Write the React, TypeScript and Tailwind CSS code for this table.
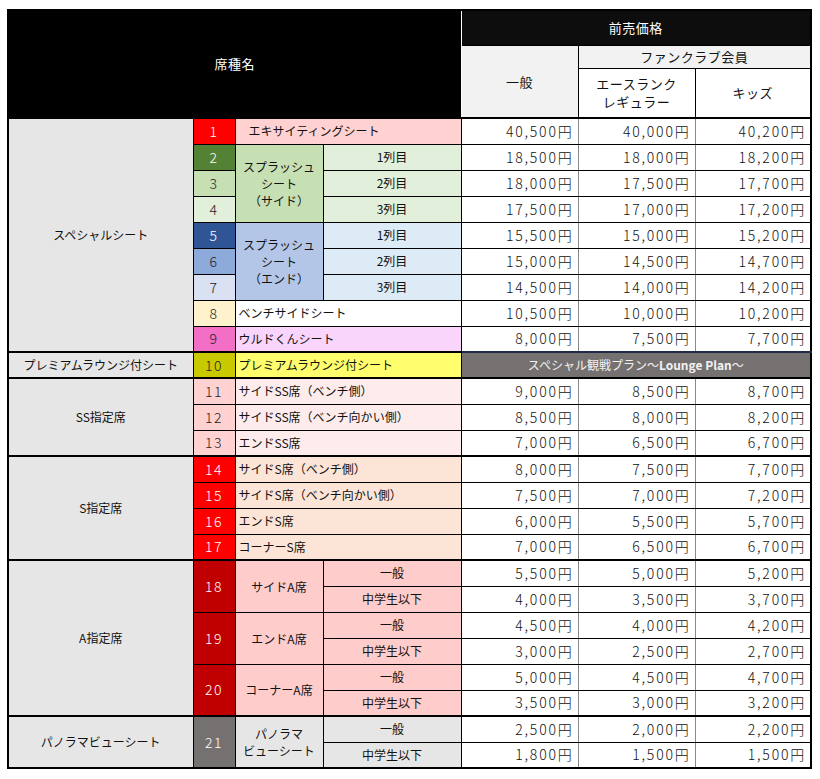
import React from 'react';

const JP = "font-['Noto_Sans_CJK_JP',sans-serif]";
const NUM = "font-['Noto_Sans_CJK_JP',sans-serif]";

type Cell = { top?: boolean };

function Num({ n, bg, light, top, span }: { n: number; bg: string; light?: boolean; top?: boolean; span?: number }) {
  return (
    <td
      rowSpan={span}
      className={`border border-black text-center text-[14px] font-light tracking-[1.5px] ${JP} ${light ? 'text-white' : 'text-[#222]'} ${top ? 'border-t-2' : ''} ${bg}`}
    >
      {n}
    </td>
  );
}

function Prices({ values, top }: { values: string[] } & Cell) {
  return (
    <>
      {values.map((v, i) => (
        <td
          key={i}
          className={`border border-black ${i > 0 ? 'border-l-[#8a8a8a]' : ''} ${i < 2 ? 'border-r-[#8a8a8a]' : ''} bg-white pr-[4px] text-right text-[14px] font-light tracking-[1.8px] text-[#111] ${NUM} ${top ? 'border-t-2' : ''}`}
        >
          {v}
        </td>
      ))}
    </>
  );
}

function Name({ text, bg, top, indent }: { text: string; bg: string; indent?: boolean } & Cell) {
  return (
    <td
      colSpan={2}
      className={`border border-black ${indent ? 'pl-[13px]' : 'pl-[3px]'} text-left text-[12px] whitespace-nowrap ${bg} ${top ? 'border-t-2' : ''}`}
    >
      {text}
    </td>
  );
}

function Sub({ text, bg, top }: { text: string; bg: string } & Cell) {
  return (
    <td className={`border border-black text-center text-[12px] ${bg} ${top ? 'border-t-2' : ''}`}>{text}</td>
  );
}

function Group({ text, span, top }: { text: string; span: number } & Cell) {
  return (
    <td
      rowSpan={span}
      className={`border border-black bg-[#e6e6e6] text-center text-[12px] whitespace-nowrap ${top ? 'border-t-2' : ''}`}
    >
      {text}
    </td>
  );
}

function Merged({ lines, bg, span, top }: { lines: string[]; bg: string; span: number } & Cell) {
  return (
    <td
      rowSpan={span}
      className={`border border-black text-center text-[12px] leading-[17px] ${bg} ${top ? 'border-t-2' : ''}`}
    >
      {lines.map((l, i) => (
        <div key={i}>{l}</div>
      ))}
    </td>
  );
}

export default function App() {
  const row = 'h-[26px]';

  return (
    <div className={`min-h-screen bg-white pl-[7px] pt-[9px] ${JP} text-[#111]`}>
      <table className="table-fixed border-collapse border-2 border-black w-[803px]">
        <colgroup>
          <col className="w-[185px]" />
          <col className="w-[42px]" />
          <col className="w-[88px]" />
          <col className="w-[138px]" />
          <col className="w-[117px]" />
          <col className="w-[117px]" />
          <col className="w-[116px]" />
        </colgroup>
        <thead>
          <tr className="h-[35px]">
            <th
              colSpan={4}
              rowSpan={3}
              className="border border-black border-r-white bg-black text-[13px] font-normal text-white tracking-[0.5px]"
            >
              席種名
            </th>
            <th colSpan={3} className="border border-black bg-[#0d0d0d] text-[13px] font-normal text-white tracking-[0.5px]">
              前売価格
            </th>
          </tr>
          <tr className="h-[23px]">
            <th rowSpan={2} className="border border-black bg-[#f2f2f2] text-[13px] font-normal tracking-[0.5px]">
              一般
            </th>
            <th colSpan={2} className="border border-black bg-[#f2f2f2] text-[13px] font-normal tracking-[0.5px]">
              ファンクラブ会員
            </th>
          </tr>
          <tr className="h-[50px]">
            <th className="border border-black bg-white text-[13px] font-normal leading-[18px] tracking-[0.5px]">
              <div>エースランク</div>
              <div>レギュラー</div>
            </th>
            <th className="border border-black bg-white text-[13px] font-normal tracking-[0.5px]">キッズ</th>
          </tr>
        </thead>
        <tbody>
          {/* スペシャルシート */}
          <tr className={row}>
            <Group text="スペシャルシート" span={9} top />
            <Num n={1} bg="bg-[#ff0000]" light top />
            <Name text="エキサイティングシート" bg="bg-[#ffd1d1]" indent top />
            <Prices values={['40,500円', '40,000円', '40,200円']} top />
          </tr>
          <tr className={row}>
            <Num n={2} bg="bg-[#548235]" light />
            <Merged lines={['スプラッシュ', 'シート', '（サイド）']} bg="bg-[#c6e0b4]" span={3} />
            <Sub text="1列目" bg="bg-[#e2efda]" />
            <Prices values={['18,500円', '18,000円', '18,200円']} />
          </tr>
          <tr className={row}>
            <Num n={3} bg="bg-[#c6e0b4]" />
            <Sub text="2列目" bg="bg-[#e2efda]" />
            <Prices values={['18,000円', '17,500円', '17,700円']} />
          </tr>
          <tr className={row}>
            <Num n={4} bg="bg-[#e2efda]" />
            <Sub text="3列目" bg="bg-[#e2efda]" />
            <Prices values={['17,500円', '17,000円', '17,200円']} />
          </tr>
          <tr className={row}>
            <Num n={5} bg="bg-[#2f5597]" light />
            <Merged lines={['スプラッシュ', 'シート', '（エンド）']} bg="bg-[#b4c6e7]" span={3} />
            <Sub text="1列目" bg="bg-[#ddebf7]" />
            <Prices values={['15,500円', '15,000円', '15,200円']} />
          </tr>
          <tr className={row}>
            <Num n={6} bg="bg-[#8eaadb]" />
            <Sub text="2列目" bg="bg-[#ddebf7]" />
            <Prices values={['15,000円', '14,500円', '14,700円']} />
          </tr>
          <tr className={row}>
            <Num n={7} bg="bg-[#d9e1f2]" />
            <Sub text="3列目" bg="bg-[#ddebf7]" />
            <Prices values={['14,500円', '14,000円', '14,200円']} />
          </tr>
          <tr className={row}>
            <Num n={8} bg="bg-[#fff2cc]" />
            <Name text="ベンチサイドシート" bg="bg-white" />
            <Prices values={['10,500円', '10,000円', '10,200円']} />
          </tr>
          <tr className={row}>
            <Num n={9} bg="bg-[#f36fc6]" />
            <Name text="ウルドくんシート" bg="bg-[#f9d4fb]" />
            <Prices values={['8,000円', '7,500円', '7,700円']} />
          </tr>

          {/* プレミアムラウンジ */}
          <tr className={row}>
            <Group text="プレミアムラウンジ付シート" span={1} top />
            <Num n={10} bg="bg-[#c9c900]" top />
            <Name text="プレミアムラウンジ付シート" bg="bg-[#ffff6d]" top />
            <td
              colSpan={3}
              className="border border-t-2 border-[#1f2b45] bg-[#767171] text-center text-[12px] text-[#f2f2f2]"
            >
              スペシャル観戦プラン〜<span className="font-bold">Lounge Plan</span>〜
            </td>
          </tr>

          {/* SS指定席 */}
          <tr className={row}>
            <Group text="SS指定席" span={3} top />
            <Num n={11} bg="bg-[#ffd1d1]" top />
            <Name text="サイドSS席（ベンチ側）" bg="bg-[#fdeceb]" top />
            <Prices values={['9,000円', '8,500円', '8,700円']} top />
          </tr>
          <tr className={row}>
            <Num n={12} bg="bg-[#ffd1d1]" />
            <Name text="サイドSS席（ベンチ向かい側）" bg="bg-[#fdeceb]" />
            <Prices values={['8,500円', '8,000円', '8,200円']} />
          </tr>
          <tr className={row}>
            <Num n={13} bg="bg-[#ffd1d1]" />
            <Name text="エンドSS席" bg="bg-[#fdeceb]" />
            <Prices values={['7,000円', '6,500円', '6,700円']} />
          </tr>

          {/* S指定席 */}
          <tr className={row}>
            <Group text="S指定席" span={4} top />
            <Num n={14} bg="bg-[#ff0000]" light top />
            <Name text="サイドS席（ベンチ側）" bg="bg-[#fce4d6]" top />
            <Prices values={['8,000円', '7,500円', '7,700円']} top />
          </tr>
          <tr className={row}>
            <Num n={15} bg="bg-[#ff0000]" light />
            <Name text="サイドS席（ベンチ向かい側）" bg="bg-[#fce4d6]" />
            <Prices values={['7,500円', '7,000円', '7,200円']} />
          </tr>
          <tr className={row}>
            <Num n={16} bg="bg-[#ff0000]" light />
            <Name text="エンドS席" bg="bg-[#fce4d6]" />
            <Prices values={['6,000円', '5,500円', '5,700円']} />
          </tr>
          <tr className={row}>
            <Num n={17} bg="bg-[#ff0000]" light />
            <Name text="コーナーS席" bg="bg-[#fce4d6]" />
            <Prices values={['7,000円', '6,500円', '6,700円']} />
          </tr>

          {/* A指定席 */}
          <tr className={row}>
            <Group text="A指定席" span={6} top />
            <Num n={18} bg="bg-[#c00000]" light top span={2} />
            <Merged lines={['サイドA席']} bg="bg-[#ffcccc]" span={2} top />
            <Sub text="一般" bg="bg-[#ffcccc]" top />
            <Prices values={['5,500円', '5,000円', '5,200円']} top />
          </tr>
          <tr className={row}>
            <Sub text="中学生以下" bg="bg-[#ffcccc]" />
            <Prices values={['4,000円', '3,500円', '3,700円']} />
          </tr>
          <tr className={row}>
            <Num n={19} bg="bg-[#c00000]" light span={2} />
            <Merged lines={['エンドA席']} bg="bg-[#ffcccc]" span={2} />
            <Sub text="一般" bg="bg-[#ffcccc]" />
            <Prices values={['4,500円', '4,000円', '4,200円']} />
          </tr>
          <tr className={row}>
            <Sub text="中学生以下" bg="bg-[#ffcccc]" />
            <Prices values={['3,000円', '2,500円', '2,700円']} />
          </tr>
          <tr className={row}>
            <Num n={20} bg="bg-[#c00000]" light span={2} />
            <Merged lines={['コーナーA席']} bg="bg-[#ffcccc]" span={2} />
            <Sub text="一般" bg="bg-[#ffcccc]" />
            <Prices values={['5,000円', '4,500円', '4,700円']} />
          </tr>
          <tr className={row}>
            <Sub text="中学生以下" bg="bg-[#ffcccc]" />
            <Prices values={['3,500円', '3,000円', '3,200円']} />
          </tr>

          {/* パノラマビューシート */}
          <tr className={row}>
            <Group text="パノラマビューシート" span={2} top />
            <Num n={21} bg="bg-[#767171]" light top span={2} />
            <Merged lines={['パノラマ', 'ビューシート']} bg="bg-[#e7e6e6]" span={2} top />
            <Sub text="一般" bg="bg-[#e7e6e6]" top />
            <Prices values={['2,500円', '2,000円', '2,200円']} top />
          </tr>
          <tr className={row}>
            <Sub text="中学生以下" bg="bg-[#e7e6e6]" />
            <Prices values={['1,800円', '1,500円', '1,500円']} />
          </tr>
        </tbody>
      </table>
    </div>
  );
}
